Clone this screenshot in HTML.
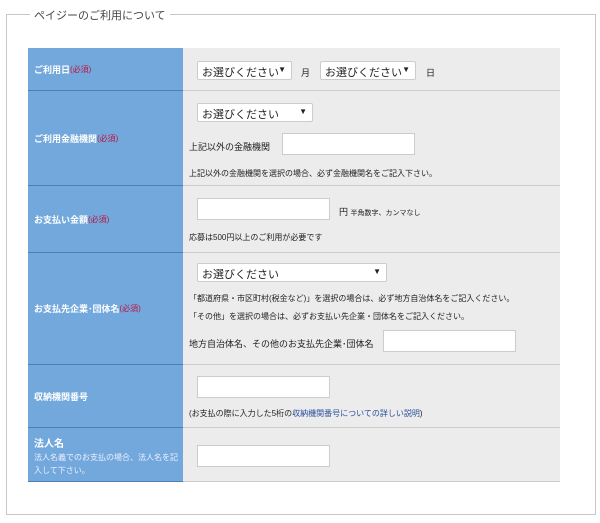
<!DOCTYPE html>
<html><head><meta charset="utf-8"><style>
*{margin:0;padding:0;box-sizing:border-box}
body{width:600px;height:523px;background:#fff;font-family:"Liberation Sans","Noto Sans CJK JP",sans-serif;position:relative;overflow:hidden;color:#222}
.fs{position:absolute;left:6px;top:14px;width:590px;height:501px;border:1px solid #c8c8c8}
.lg{position:absolute;left:30px;top:6px;background:#fff;padding:0 4px;font-size:11px;color:#444}
.row{position:absolute;left:28px;width:532px}
.lab{position:absolute;left:0;top:0;bottom:0;width:155px;background:#72a8dc;border-bottom:1px solid #4a7fb8;color:#fff;font-size:9px;font-weight:bold;padding-left:6px;display:flex;align-items:center}
.con{position:absolute;left:155px;right:0;top:0;bottom:0;background:#ececec;border-bottom:1px solid #ccc}
.req{color:#c0143c;font-weight:normal;font-size:8px}
.a{position:absolute;font-size:8px;white-space:nowrap}
.sel{position:absolute;height:19px;background:#fff;border:1px solid #ccc;border-radius:2px;font-size:11px;padding:2px 4px;white-space:nowrap;overflow:hidden}
.sel b{position:absolute;right:5px;top:3px;font-size:8px}
.inp{position:absolute;height:22px;background:#fff;border:1px solid #ccc}
</style></head><body>
<div class="fs"></div><div class="lg" style="top:7px">ペイジーのご利用について</div>

<div class="row" style="top:48px;height:43px"><div class="lab">ご利用日<span class="req">(必須)</span></div><div class="con">
<div class="sel" style="left:14px;top:13px;width:95px">お選びください<b>▼</b></div>
<div class="a" style="left:118px;top:18px;font-size:9px">月</div>
<div class="sel" style="left:137px;top:13px;width:96px">お選びください<b>▼</b></div>
<div class="a" style="left:243px;top:18px;font-size:9px">日</div></div></div>

<div class="row" style="top:91px;height:95px"><div class="lab">ご利用金融機関<span class="req">(必須)</span></div><div class="con">
<div class="sel" style="left:14px;top:12px;width:116px">お選びください<b>▼</b></div>
<div class="a" style="left:6px;top:49px;font-size:9px">上記以外の金融機関</div>
<div class="inp" style="left:99px;top:42px;width:133px"></div>
<div class="a" style="left:6px;top:77px">上記以外の金融機関を選択の場合、必ず金融機関名をご記入下さい。</div></div></div>

<div class="row" style="top:186px;height:67px"><div class="lab">お支払い金額<span class="req">(必須)</span></div><div class="con">
<div class="inp" style="left:14px;top:12px;width:133px"></div>
<div class="a" style="left:156px;top:19px;font-size:9px">円 <span style="font-size:7px">半角数字、カンマなし</span></div>
<div class="a" style="left:6px;top:46px">応募は500円以上のご利用が必要です</div></div></div>

<div class="row" style="top:253px;height:112px"><div class="lab">お支払先企業･団体名<span class="req">(必須)</span></div><div class="con">
<div class="sel" style="left:14px;top:10px;width:190px">お選びください<b>▼</b></div>
<div class="a" style="left:6px;top:40px">「都道府県・市区町村(税金など)」を選択の場合は、必ず地方自治体名をご記入ください。</div>
<div class="a" style="left:6px;top:58px">「その他」を選択の場合は、必ずお支払い先企業・団体名をご記入ください。</div>
<div class="a" style="left:6px;top:84px;font-size:9px">地方自治体名、その他のお支払先企業･団体名</div>
<div class="inp" style="left:200px;top:77px;width:133px"></div></div></div>

<div class="row" style="top:365px;height:63px"><div class="lab">収納機関番号</div><div class="con">
<div class="inp" style="left:14px;top:11px;width:133px"></div>
<div class="a" style="left:6px;top:43px">(お支払の際に入力した5桁の<span style="color:#2a4f9a">収納機関番号についての詳しい説明</span>)</div></div></div>

<div class="row" style="top:428px;height:54px"><div class="lab" style="display:block;padding-top:7px;font-size:10px">法人名<div style="font-weight:normal;font-size:8px;line-height:13px;margin-top:1px;color:#eef">法人名義でのお支払の場合、法人名を記入して下さい。</div></div><div class="con">
<div class="inp" style="left:14px;top:17px;width:133px"></div></div></div>
</body></html>
